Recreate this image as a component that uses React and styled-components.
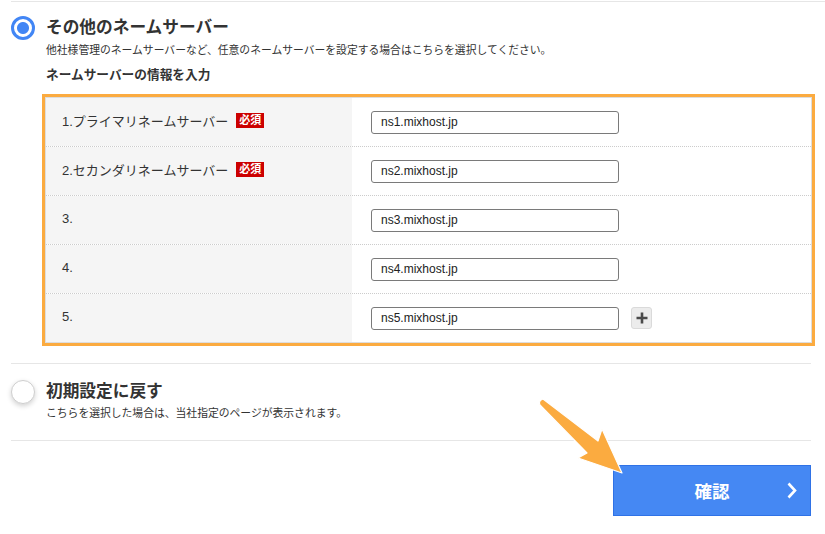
import styled, { createGlobalStyle } from 'styled-components';

const GlobalStyle = createGlobalStyle`
    body {
        margin: 0;
        background: #ffffff;
        font-family: "Liberation Sans", "Noto Sans CJK JP", sans-serif;
        color: #333333;
    }
`;

const servers = [
    { label: '1.プライマリネームサーバー', value: 'ns1.mixhost.jp', required: true },
    { label: '2.セカンダリネームサーバー', value: 'ns2.mixhost.jp', required: true },
    { label: '3.', value: 'ns3.mixhost.jp' },
    { label: '4.', value: 'ns4.mixhost.jp' },
    { label: '5.', value: 'ns5.mixhost.jp', addable: true },
];

export default function App() {
    return (
        <>
            <GlobalStyle />
            <Page>
                <Option>
                    <Radio checked />
                    <OptionBody>
                        <Title>その他のネームサーバー</Title>
                        <Desc>他社様管理のネームサーバーなど、任意のネームサーバーを設定する場合はこちらを選択してください。</Desc>
                        <SubHeading>ネームサーバーの情報を入力</SubHeading>
                        <Table>
                            {servers.map(server =>
                                <Row key={server.value}>
                                    <LabelCell>
                                        {server.label}
                                        {server.required && <Badge>必須</Badge>}
                                    </LabelCell>
                                    <InputCell>
                                        <Input defaultValue={server.value} readOnly />
                                        {server.addable &&
                                            <AddButton aria-label="add">
                                                <svg width="12" height="12" viewBox="0 0 12 12">
                                                    <path d="M6 0.5v11M0.5 6h11" stroke="#4a4a4a" strokeWidth="2.6" />
                                                </svg>
                                            </AddButton>
                                        }
                                    </InputCell>
                                </Row>
                            )}
                        </Table>
                    </OptionBody>
                </Option>
                <Option last>
                    <Radio />
                    <OptionBody>
                        <Title>初期設定に戻す</Title>
                        <Desc tight>こちらを選択した場合は、当社指定のページが表示されます。</Desc>
                    </OptionBody>
                </Option>
                <Footer>
                    <SubmitButton>
                        <span />
                        <SubmitLabel>確認</SubmitLabel>
                        <svg width="10" height="17" viewBox="0 0 10 17">
                            <path d="M1.5 1.5l6.5 7-6.5 7" fill="none" stroke="#ffffff" strokeWidth="2.6" />
                        </svg>
                    </SubmitButton>
                </Footer>
                {/* pointer arrow drawn on top of the screenshot */}
                <Arrow width="110" height="100" viewBox="0 0 110 100">
                    <path
                        d="M13 9 L68 51 L72 39 L92 83 L48 68 L57 63 L10 15 Q8 11 13 9 Z"
                        fill="#fbab40"
                        stroke="#ffffff"
                        strokeWidth="1.2"
                        strokeLinejoin="round"
                    />
                </Arrow>
            </Page>
        </>
    );
}

const Page = styled.div`
    position: relative;
    width: 800px;
    margin: 1px 0 0 11px;
`;

const Option = styled.section`
    display: grid;
    grid-template-columns: 35px 1fr;
    border-top: 1px solid #e6e6e6;
    border-bottom: ${props => props.last ? '1px solid #e6e6e6' : 'none'};
    padding: ${props => props.last ? '16px 0 19px' : '14px 0 20px'};

    &:first-child {
        margin-right: -14px;
    }
`;

const Radio = styled.span`
    box-sizing: border-box;
    width: 24px;
    height: 24px;
    border-radius: 50%;
    background: #ffffff;
    ${props => props.checked
        ? `border: 3px solid #4286f5;
           background: radial-gradient(circle, #4286f5 0 5.5px, #ffffff 6.5px);`
        : `border: 1px solid #cfcfcf;
           box-shadow: 0 2px 5px rgba(0, 0, 0, 0.18);`}
`;

const OptionBody = styled.div`
    min-width: 0;
`;

const Title = styled.h2`
    margin: 0;
    font-size: 16.7px;
    line-height: 24px;
    font-weight: bold;
    color: #333333;
`;

const Desc = styled.p`
    margin: ${props => props.tight ? '1px' : '2px'} 0 0;
    font-size: 10.8px;
    line-height: 16px;
    color: #333333;
`;

const SubHeading = styled.h3`
    margin: 8px 0 0;
    font-size: 12.7px;
    line-height: 18px;
    font-weight: bold;
    color: #333333;
`;

const Table = styled.div`
    width: 765px;
    margin: 13px 0 0 -1px;
    border: 1px solid #dddddd;
    outline: 3px solid #fbab40;
`;

const Row = styled.div`
    display: grid;
    grid-template-columns: 306px 1fr;
    height: 48px;
    border-bottom: 1px dotted #cccccc;

    &:last-child {
        border-bottom: none;
    }
`;

const LabelCell = styled.div`
    display: flex;
    align-items: center;
    padding: 0 0 4px 16px;
    background: #f5f5f5;
    font-size: 13px;
    color: #333333;
`;

const Badge = styled.span`
    display: inline-block;
    margin-left: 8px;
    padding: 0 3px;
    height: 15px;
    line-height: 15px;
    background: #cc0000;
    color: #ffffff;
    font-size: 11px;
    font-weight: bold;
`;

const InputCell = styled.div`
    display: flex;
    align-items: center;
    gap: 12px;
    padding-left: 19px;
    background: #ffffff;
`;

const Input = styled.input`
    box-sizing: border-box;
    width: 248px;
    height: 23px;
    padding: 0 9px;
    border: 1px solid #7a7a7a;
    border-radius: 3px;
    font-family: "Liberation Sans", sans-serif;
    font-size: 12px;
    color: #222222;
    outline: none;
`;

const AddButton = styled.button`
    display: flex;
    align-items: center;
    justify-content: center;
    width: 21px;
    height: 22px;
    padding: 0;
    background: #ececec;
    border: 1px solid #dadada;
    border-radius: 3px;
`;

const Footer = styled.div`
    display: flex;
    justify-content: flex-end;
    padding-top: 24px;
`;

const SubmitButton = styled.button`
    display: grid;
    grid-template-columns: 36px 1fr 36px;
    align-items: center;
    justify-items: center;
    width: 198px;
    height: 51px;
    padding: 0;
    background: #4588f3;
    border: 1px solid #2f72e6;
    color: #ffffff;
    font-family: "Liberation Sans", "Noto Sans CJK JP", sans-serif;
`;

const SubmitLabel = styled.span`
    font-size: 17.5px;
    font-weight: bold;
`;

const Arrow = styled.svg`
    position: absolute;
    left: 519px;
    top: 389px;
`;
